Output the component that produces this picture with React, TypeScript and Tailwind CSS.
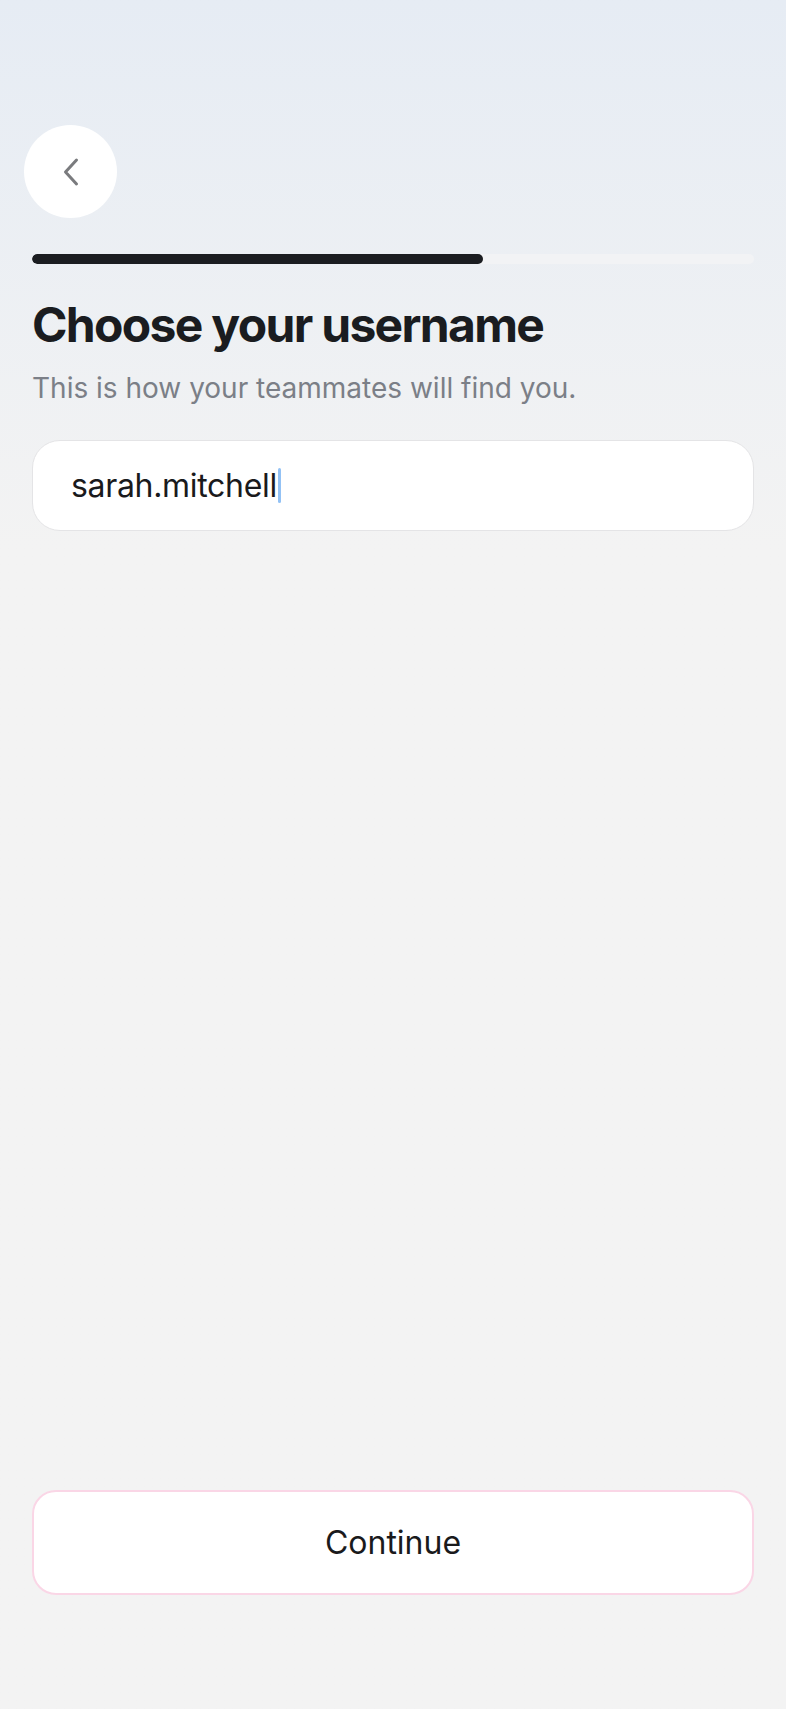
const font = { fontFamily: "Inter, 'Noto Sans', sans-serif" };

function BackChevron() {
  return (
    <svg width="20" height="30" viewBox="0 0 20 30" fill="none">
      <polyline
        points="15.5,3 4.5,15 15.5,27"
        stroke="#7a7b7e"
        strokeWidth="3"
        strokeLinecap="round"
        strokeLinejoin="round"
      />
    </svg>
  );
}

export default function App() {
  const progress = 62.5;

  return (
    <div
      className="min-h-screen flex flex-col px-8 bg-linear-to-b from-[#e6ecf4] from-0% to-[#f3f3f3] to-[32%]"
      style={font}
    >
      {/* Back button */}
      <button className="mt-[125px] -ml-2 w-[93px] h-[93px] rounded-full bg-white flex items-center justify-center">
        <BackChevron />
      </button>

      {/* Progress */}
      <div className="mt-9 h-[10px] w-full rounded-full bg-[#f2f3f5] overflow-hidden">
        <div className="h-full rounded-full bg-[#1b1d21]" style={{ width: `${progress}%` }} />
      </div>

      <h1 className="mt-[37px] text-[48px] leading-[48px] font-bold tracking-[-0.035em] text-[#1a1c20]">
        Choose your username
      </h1>
      <p className="mt-[21px] text-[28px] leading-[36px] text-[#7b7f87]">
        This is how your teammates will find you.
      </p>

      {/* Username field */}
      <div className="mt-[34px] h-[91px] rounded-[28px] bg-white border-[1.5px] border-[#e4e4e6] flex items-center pl-[38px]">
        <span className="text-[32px] tracking-[-0.01em] text-[#1a1a1c]">sarah.mitchell</span>
        <span className="ml-px w-[3px] h-[35px] rounded-full bg-[#93c2f5]" />
      </div>

      <button className="mt-auto mb-[114px] h-[105px] rounded-[24px] bg-white border-2 border-[#fad6e6] text-[32px] text-[#1a1a1c]">
        Continue
      </button>
    </div>
  );
}
